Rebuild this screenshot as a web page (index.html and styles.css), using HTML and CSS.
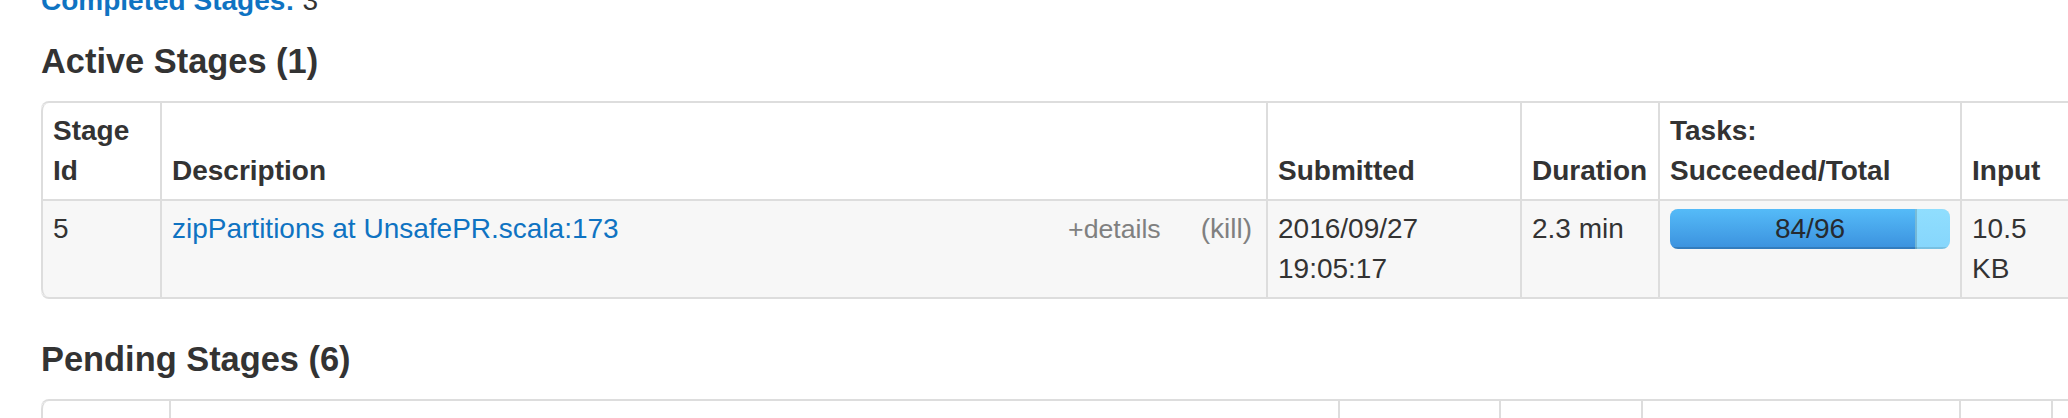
FILE: index.html
```html
<!DOCTYPE html>
<html lang="en">
<head>
<meta charset="utf-8">
<title>Spark Jobs - Stages</title>
<link rel="stylesheet" href="styles.css">
</head>
<body>
<div class="page">
  <ul class="summary">
    <li><a href="#completed"><strong>Completed Stages:</strong></a> 3</li>
  </ul>

  <h4 id="active">Active Stages (1)</h4>
  <table class="stages active-table">
    <thead>
      <tr>
        <th class="a-id">Stage Id</th>
        <th class="a-desc">Description</th>
        <th class="a-sub">Submitted</th>
        <th class="a-dur">Duration</th>
        <th class="a-tasks">Tasks: Succeeded/Total</th>
        <th class="a-in">Input</th>
      </tr>
    </thead>
    <tbody>
      <tr>
        <td>5</td>
        <td>
          <a href="#" class="kill-link">(kill)</a>
          <span class="expand-details">+details</span>
          <a href="#" class="name-link">zipPartitions at UnsafePR.scala:173</a>
        </td>
        <td>2016/09/27 19:05:17</td>
        <td>2.3 min</td>
        <td>
          <div class="progress">
            <span class="progress-label">84/96</span>
            <div class="bar bar-completed" style="width: 87.5%"></div>
            <div class="bar bar-running" style="width: 12.5%"></div>
          </div>
        </td>
        <td>10.5 KB</td>
      </tr>
    </tbody>
  </table>

  <h4 id="pending">Pending Stages (6)</h4>
  <table class="stages pending-table">
    <thead>
      <tr>
        <th class="p-id">Stage Id</th>
        <th class="p-desc">Description</th>
        <th class="p-sub">Submitted</th>
        <th class="p-dur">Duration</th>
        <th class="p-tasks">Tasks: Succeeded/Total</th>
        <th class="p-in">Input</th>
        <th class="p-out">Output</th>
      </tr>
    </thead>
  </table>
</div>
</body>
</html>
```

FILE: styles.css
```css
html, body {
  overflow: hidden;
}

body {
  margin: 0;
  background: #ffffff;
  color: #333333;
  font-family: "Liberation Sans", Arial, Helvetica, sans-serif;
  font-size: 28px;
  line-height: 40px;
}

a {
  color: #0f73c2;
  text-decoration: none;
}

.page {
  padding-left: 41px;
  width: 2300px;
}

/* the page is scrolled down: only the last summary line peeks in */
.summary {
  list-style: none;
  padding: 0;
  margin: -19px 0 20px 0;
}

h4 {
  font-size: 34.4px;
  line-height: 40px;
  font-weight: bold;
  color: #333333;
  margin: 20px 0;
}

.stages {
  table-layout: fixed;
  border-collapse: separate;
  border-spacing: 0;
  border: 2px solid #dddddd;
  border-left: 0;
  border-radius: 8px;
  margin-bottom: 40px;
}

.active-table { width: 2039px; }
.pending-table { width: 2162px; }

.stages th,
.stages td {
  box-sizing: border-box;
  padding: 8px 10px;
  border-left: 2px solid #dddddd;
  text-align: left;
}

.stages th {
  vertical-align: bottom;
  font-weight: bold;
  background: #ffffff;
}

.stages td {
  vertical-align: top;
  border-top: 2px solid #dddddd;
  background: #f7f7f7;
}

.stages thead tr:first-child th:first-child {
  border-top-left-radius: 8px;
}

.stages tbody tr:last-child td:first-child {
  border-bottom-left-radius: 8px;
}

/* active stages column widths */
.a-id { width: 119px; }
.a-desc { width: 1106px; }
.a-sub { width: 254px; }
.a-dur { width: 138px; white-space: nowrap; }
.a-tasks { width: 302px; }
.a-in { width: 118px; }

/* pending stages column widths */
.p-id { width: 128px; }
.p-desc { width: 1169px; }
.p-sub { width: 161px; }
.p-dur { width: 142px; white-space: nowrap; }
.p-tasks { width: 318px; }
.p-in { width: 92px; }
.p-out { width: 150px; }

.kill-link {
  float: right;
  margin-left: 40px;
  margin-right: 4px;
  color: #808080;
}

.expand-details {
  float: right;
  font-size: 26.67px;
  color: #808080;
}

.progress {
  position: relative;
  display: flex;
  height: 40px;
  border-radius: 8px;
  overflow: hidden;
  background: linear-gradient(to bottom, #f5f5f5, #f9f9f9);
  box-shadow: inset 0 2px 4px rgba(0, 0, 0, 0.1);
}

.progress-label {
  position: absolute;
  left: 0;
  right: 0;
  top: 0;
  text-align: center;
  color: #252a30;
  line-height: 40px;
}

.bar {
  height: 100%;
  box-shadow: inset 0 -2px 0 rgba(0, 0, 0, 0.15);
}

.bar-completed {
  background: linear-gradient(to bottom, #55bbf8, #3b91de);
}

.bar-running {
  background: linear-gradient(to bottom, #90defe, #86d6fc);
  box-shadow: inset 2px 0 0 rgba(0, 0, 0, 0.15), inset 0 -2px 0 rgba(0, 0, 0, 0.1);
}
```
